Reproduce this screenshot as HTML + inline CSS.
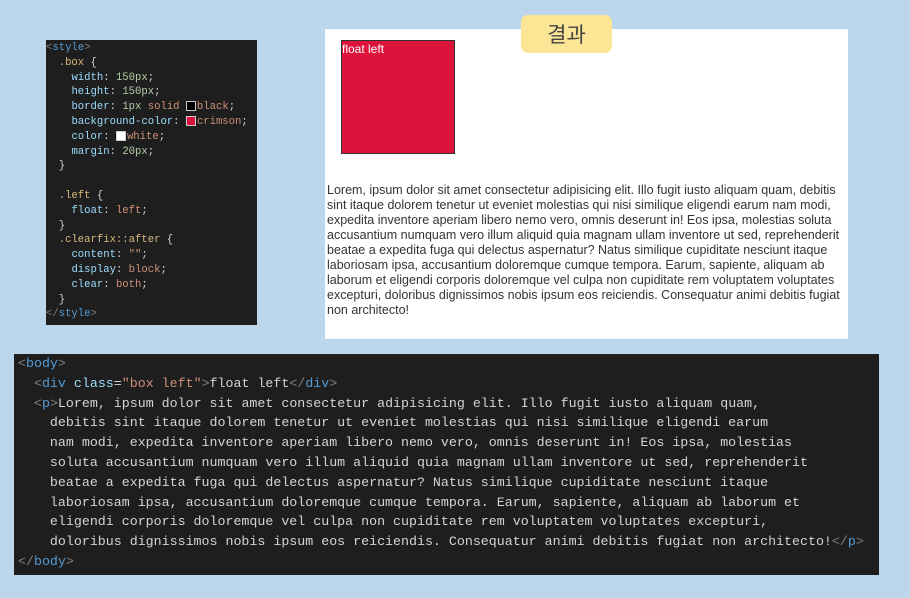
<!DOCTYPE html>
<html><head><meta charset="utf-8"><style>
body{margin:0;width:910px;height:598px;background:#bcd6ec;position:relative;overflow:hidden}
.code{position:absolute;background:#1e1e1e;font-family:"Liberation Mono",monospace;white-space:pre;color:#d4d4d4}
#css{left:46px;top:40px;width:211px;height:285px;font-size:10.6px;line-height:14.8px;padding-top:1px;box-sizing:border-box}
#html{left:14px;top:354px;width:861px;height:221px;font-size:13.3px;line-height:19.8px;padding-left:4px}
.t{color:#569cd6}.g{color:#808080}.a{color:#9cdcfe}.s{color:#ce9178}.n{color:#b5cea8}.y{color:#d7ba7d}.w{color:#d4d4d4}
.sw{display:inline-block;width:8px;height:8px;border:1px solid #ccc;vertical-align:middle;margin-right:1px;line-height:0}
#res{position:absolute;left:325px;top:29px;width:523px;height:310px;background:#fff}
#box{position:absolute;left:16px;top:11px;width:112px;height:112px;background:crimson;border:1px solid #333;color:#fff;font:12px "Liberation Sans",sans-serif;line-height:16px}
#p{position:absolute;left:2px;top:154px;font:12.5px "Liberation Sans",sans-serif;line-height:15px;color:#333;white-space:pre}
#badge{position:absolute;left:521px;top:15px;width:91px;height:38px;background:#fde596;border-radius:7px;font:21px "Noto Sans CJK KR",sans-serif;color:#444;text-align:center;line-height:38px}
</style></head><body>
<div class="code" id="css"><span class="g">&lt;</span><span class="t">style</span><span class="g">&gt;</span>
  <span class="y">.box</span> {
    <span class="a">width</span>: <span class="n">150px</span>;
    <span class="a">height</span>: <span class="n">150px</span>;
    <span class="a">border</span>: <span class="n">1px</span> <span class="s">solid</span> <span class="sw" style="background:#000"></span><span class="s">black</span>;
    <span class="a">background-color</span>: <span class="sw" style="background:crimson"></span><span class="s">crimson</span>;
    <span class="a">color</span>: <span class="sw" style="background:#fff"></span><span class="s">white</span>;
    <span class="a">margin</span>: <span class="n">20px</span>;
  }

  <span class="y">.left</span> {
    <span class="a">float</span>: <span class="s">left</span>;
  }
  <span class="y">.clearfix::after</span> {
    <span class="a">content</span>: <span class="s">""</span>;
    <span class="a">display</span>: <span class="s">block</span>;
    <span class="a">clear</span>: <span class="s">both</span>;
  }
<span class="g">&lt;/</span><span class="t">style</span><span class="g">&gt;</span></div>
<div id="res"><div id="box">float left</div><div id="p">Lorem, ipsum dolor sit amet consectetur adipisicing elit. Illo fugit iusto aliquam quam, debitis
sint itaque dolorem tenetur ut eveniet molestias qui nisi similique eligendi earum nam modi,
expedita inventore aperiam libero nemo vero, omnis deserunt in! Eos ipsa, molestias soluta
accusantium numquam vero illum aliquid quia magnam ullam inventore ut sed, reprehenderit
beatae a expedita fuga qui delectus aspernatur? Natus similique cupiditate nesciunt itaque
laboriosam ipsa, accusantium doloremque cumque tempora. Earum, sapiente, aliquam ab
laborum et eligendi corporis doloremque vel culpa non cupiditate rem voluptatem voluptates
excepturi, doloribus dignissimos nobis ipsum eos reiciendis. Consequatur animi debitis fugiat
non architecto!</div></div>
<div id="badge">결과</div>
<div class="code" id="html"><span class="g">&lt;</span><span class="t">body</span><span class="g">&gt;</span>
  <span class="g">&lt;</span><span class="t">div</span> <span class="a">class</span>=<span class="s">"box left"</span><span class="g">&gt;</span>float left<span class="g">&lt;/</span><span class="t">div</span><span class="g">&gt;</span>
  <span class="g">&lt;</span><span class="t">p</span><span class="g">&gt;</span>Lorem, ipsum dolor sit amet consectetur adipisicing elit. Illo fugit iusto aliquam quam,
    debitis sint itaque dolorem tenetur ut eveniet molestias qui nisi similique eligendi earum
    nam modi, expedita inventore aperiam libero nemo vero, omnis deserunt in! Eos ipsa, molestias
    soluta accusantium numquam vero illum aliquid quia magnam ullam inventore ut sed, reprehenderit
    beatae a expedita fuga qui delectus aspernatur? Natus similique cupiditate nesciunt itaque
    laboriosam ipsa, accusantium doloremque cumque tempora. Earum, sapiente, aliquam ab laborum et
    eligendi corporis doloremque vel culpa non cupiditate rem voluptatem voluptates excepturi,
    doloribus dignissimos nobis ipsum eos reiciendis. Consequatur animi debitis fugiat non architecto!<span class="g">&lt;/</span><span class="t">p</span><span class="g">&gt;</span>
<span class="g">&lt;/</span><span class="t">body</span><span class="g">&gt;</span></div>
</body></html>
